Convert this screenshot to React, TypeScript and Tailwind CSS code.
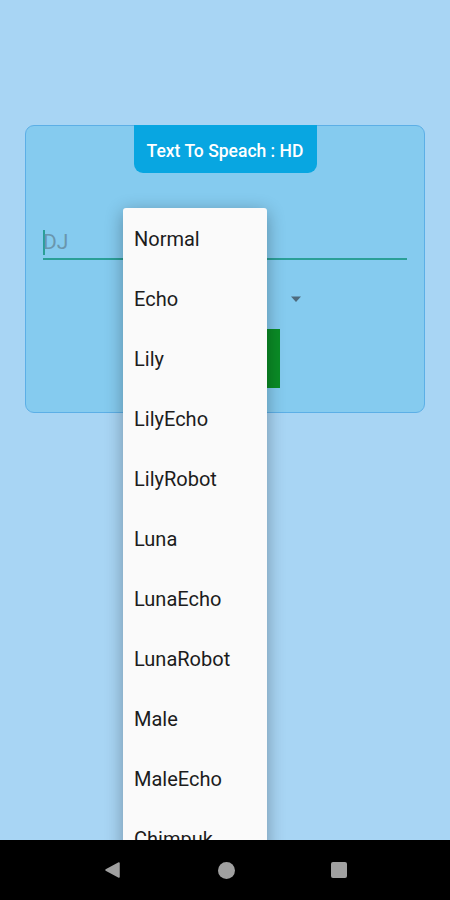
import React from "react";

const items = [
  "Normal",
  "Echo",
  "Lily",
  "LilyEcho",
  "LilyRobot",
  "Luna",
  "LunaEcho",
  "LunaRobot",
  "Male",
  "MaleEcho",
  "Chimpuk",
];

export default function App() {
  return (
    <div
      className="w-[450px] h-[900px] flex flex-col bg-[#a8d5f4] overflow-hidden"
      style={{ fontFamily: "Roboto, 'Noto Sans', sans-serif" }}
    >
      <div className="relative h-[840px] overflow-hidden">
        <div className="pt-[125px] px-[25px]">
          <div className="h-[288px] rounded-[9px] border border-[#5cafe6] bg-[#85cbef] flex flex-col items-center">
            <div className="w-[183px] h-[48px] -mt-px pt-[4px] bg-[#08a6e1] rounded-b-[9px] flex items-center justify-center text-white text-[17.5px] font-medium">
              Text To Speach : HD
            </div>
            <div className="self-stretch mx-[17px] mt-[54px] h-[33px] border-b-2 border-[#2a9f97] flex items-center">
              <div className="w-[2px] h-[25px] bg-[#2a9f97]" />
              <span className="text-[21px] text-[#6a96ad] -ml-[2px] leading-none">DJ</span>
            </div>
            <div className="self-stretch flex justify-end pr-[122px] mt-[36px] h-[10px]">
              <svg width="12" height="7" viewBox="0 0 12 7">
                <path d="M1 0.5 L11 0.5 L6 6 Z" fill="#4e6b7e" />
              </svg>
            </div>
            <div className="self-stretch flex justify-end pr-[144px] mt-[23px]">
              <div className="w-[130px] h-[59px] bg-[#0a8c26]" />
            </div>
          </div>
        </div>

        <div className="absolute left-[123px] top-[208px] w-[144px] bg-[#fafafa] rounded-t-[3px] shadow-[0_4px_18px_rgba(0,0,0,0.32)]">
          {items.map((it) => (
            <div
              key={it}
              className="h-[60px] flex items-center pl-[11px] text-[20px] text-[#1c1c1c]"
              style={{ marginTop: it === "Normal" ? 1 : 0 }}
            >
              {it}
            </div>
          ))}
        </div>
      </div>

      <div className="h-[60px] bg-black flex items-center">
        <div className="flex items-center w-full">
          <div className="w-[226px] flex justify-end pr-[106px]">
            <svg width="15" height="16" viewBox="0 0 15 16">
              <path d="M14 1 L14 15 L1 8 Z" fill="#a0a0a0" strokeLinejoin="round" stroke="#a0a0a0" strokeWidth="1.5" />
            </svg>
          </div>
          <div className="w-[17px] h-[17px] rounded-full bg-[#a0a0a0] -ml-[8px]" />
          <div className="ml-[96px] w-[16px] h-[16px] rounded-[2px] bg-[#a0a0a0]" />
        </div>
      </div>
    </div>
  );
}
